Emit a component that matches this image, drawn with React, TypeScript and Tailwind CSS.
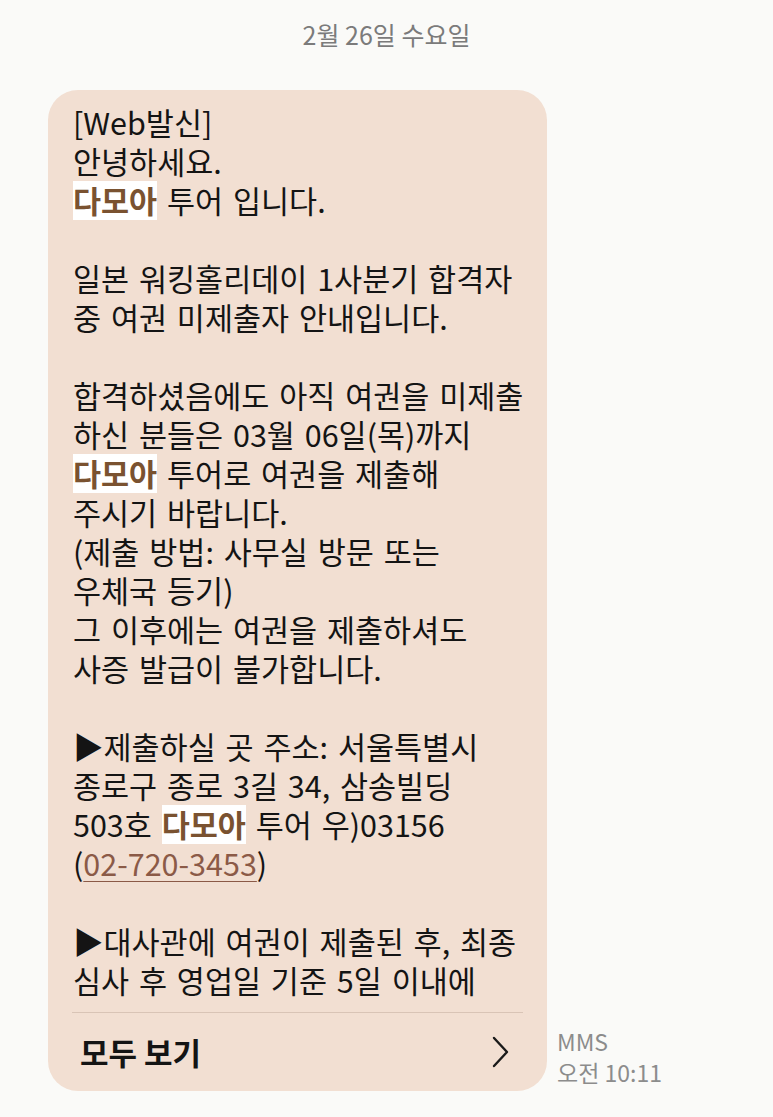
import React from "react";

const H = ({ children }: { children: React.ReactNode }) => (
  <span className="inline-block bg-white font-bold leading-[39px] text-[#7a5230] [word-spacing:0]">
    {children}
  </span>
);

const lines: React.ReactNode[] = [
  "[Web발신]",
  "안녕하세요.",
  <>
    <H>다모아</H> 투어 입니다.
  </>,
  "",
  "일본 워킹홀리데이 1사분기 합격자",
  "중 여권 미제출자 안내입니다.",
  "",
  "합격하셨음에도 아직 여권을 미제출",
  "하신 분들은 03월 06일(목)까지",
  <>
    <H>다모아</H> 투어로 여권을 제출해
  </>,
  "주시기 바랍니다.",
  "(제출 방법: 사무실 방문 또는",
  "우체국 등기)",
  "그 이후에는 여권을 제출하셔도",
  "사증 발급이 불가합니다.",
  "",
  "▶제출하실 곳 주소: 서울특별시",
  "종로구 종로 3길 34, 삼송빌딩",
  <>
    503호 <H>다모아</H> 투어 우)03156
  </>,
  <>
    (<span className="text-[#8b5a47] underline decoration-[#8b5a47] decoration-1 underline-offset-[5px]">02-720-3453</span>)
  </>,
  "",
  "▶대사관에 여권이 제출된 후, 최종",
  "심사 후 영업일 기준 5일 이내에",
];

export default function App() {
  return (
    <div
      className="min-h-[1117px] w-[773px] bg-[#fafaf8]"
      style={{ fontFamily: '"Noto Sans CJK KR", "Noto Sans", sans-serif' }}
    >
      <div className="pt-[15px] text-center text-[25px] leading-[38px] text-[#7b7b7b]">
        2월 26일 수요일
      </div>
      <div className="mt-[37px] flex items-end gap-[10px] pl-[48px]">
        <div className="w-[499px] rounded-[30px] bg-[#f2dfd2]">
          <div className="pl-[25px] pr-[10px] pt-[13px] text-[30.5px] leading-[39px] text-[#141414] [word-spacing:3px]">
            {lines.map((l, i) => (
              <div key={i} className="h-[39px] whitespace-nowrap">
                {l}
              </div>
            ))}
          </div>
          <div className="mx-[24px] mt-[12px] h-px bg-[#d9c4b6]" />
          <div className="flex h-[78px] items-center justify-between pl-[32px] pr-[38px]">
            <span className="text-[31px] font-bold text-[#141414]">모두 보기</span>
            <svg width="18" height="32" viewBox="0 0 18 32" fill="none">
              <polyline
                points="3,2 16,16 3,30"
                stroke="#1a1a1a"
                strokeWidth="2.4"
                strokeLinecap="round"
                strokeLinejoin="round"
              />
            </svg>
          </div>
        </div>
        <div className="mb-[3px] text-[23px] leading-[31px] text-[#8c8c8c]">
          <div>MMS</div>
          <div>오전 10:11</div>
        </div>
      </div>
    </div>
  );
}
